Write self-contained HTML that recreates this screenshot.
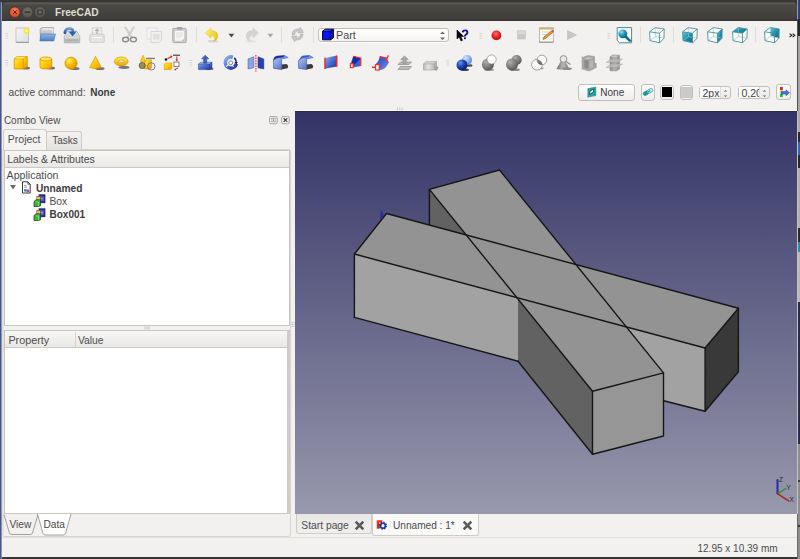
<!DOCTYPE html><html><head><meta charset="utf-8"><style>
*{margin:0;padding:0;box-sizing:border-box}
html,body{width:800px;height:559px;overflow:hidden;background:#383733}
body{position:relative;font-family:"Liberation Sans",sans-serif;font-size:10.5px;color:#3c3c3c}
.a{position:absolute}
.t{white-space:pre;line-height:1}
</style></head><body>
<div class="a" style="left:0;top:0;width:800px;height:559px;background:#383733"></div>
<div class="a" style="left:0;top:2px;width:1px;height:557px;background:#44578a"></div>
<div class="a" style="left:1px;top:2px;width:1px;height:557px;background:#8e97ae"></div>
<div class="a" style="left:797px;top:0;width:3px;height:559px;background:#9a9a9a"></div>
<div class="a" style="left:798px;top:0px;width:2px;height:19px;background:#2c3f82"></div>
<div class="a" style="left:798px;top:19px;width:2px;height:17px;background:#282828"></div>
<div class="a" style="left:798px;top:36px;width:2px;height:96px;background:#a8a8a8"></div>
<div class="a" style="left:798px;top:132px;width:2px;height:36px;background:#2a2a2a"></div>
<div class="a" style="left:798px;top:142px;width:2px;height:13px;background:#3462c0"></div>
<div class="a" style="left:798px;top:168px;width:2px;height:60px;background:#b0b0b0"></div>
<div class="a" style="left:798px;top:228px;width:2px;height:14px;background:#2a2a2a"></div>
<div class="a" style="left:798px;top:242px;width:2px;height:10px;background:#2a90a0"></div>
<div class="a" style="left:798px;top:252px;width:2px;height:50px;background:#b8b8b8"></div>
<div class="a" style="left:798px;top:302px;width:2px;height:142px;background:#2a2a4c"></div>
<div class="a" style="left:798px;top:444px;width:2px;height:115px;background:#8e8e8e"></div>
<div class="a" style="left:798px;top:480px;width:2px;height:2px;background:#3a3a3a"></div>
<div class="a" style="left:798px;top:525px;width:2px;height:2px;background:#3a3a3a"></div>
<div class="a" style="left:797px;top:19px;width:1px;height:92px;background:#505050"></div>
<div class="a" style="left:797px;top:111px;width:1px;height:403px;background:#c4c4c4"></div>
<div class="a" style="left:797px;top:514px;width:1px;height:45px;background:#6a6a6a"></div>
<div class="a" style="left:2px;top:21px;width:795px;height:536px;background:#f2f1f0"></div>
<div class="a" style="left:2px;top:2px;width:795px;height:19px;background:linear-gradient(#4a4944 0px,#5a5852 1.5px,#4a4944 3px,#3f3e3a 17px,#302f2c 19px);border-radius:5px 5px 0 0"></div>
<svg class="a" style="left:8px;top:6px" width="40" height="14" viewBox="0 0 40 14">
<defs><radialGradient id="cl" cx="50%" cy="35%" r="60%"><stop offset="0" stop-color="#f7865b"/><stop offset="1" stop-color="#d9471c"/></radialGradient>
<radialGradient id="gb" cx="50%" cy="35%" r="60%"><stop offset="0" stop-color="#6e6d68"/><stop offset="1" stop-color="#55544f"/></radialGradient></defs>
<circle cx="6.8" cy="6.2" r="5.3" fill="url(#cl)" stroke="#3a1a10" stroke-width="0.5"/>
<path d="M5.2,4.4 L8.8,8 M8.8,4.4 L5.2,8" stroke="#3a1408" stroke-width="1"/>
<circle cx="19.5" cy="6.2" r="5.6" fill="url(#gb)" stroke="#333" stroke-width="0.5"/>
<path d="M16.8,6.2 H22.2" stroke="#3a3935" stroke-width="1.6"/>
<circle cx="32" cy="6.2" r="5.6" fill="url(#gb)" stroke="#333" stroke-width="0.5"/>
<rect x="29.8" y="4" width="4.4" height="4.4" fill="none" stroke="#3a3935" stroke-width="1.2"/>
</svg>
<div class="a t" style="left:55px;top:8px;font-size:10.2px;color:#dfdbd2;font-weight:bold;">FreeCAD</div>
<svg class="a" style="left:5px;top:33px" width="4" height="7" viewBox="0 0 4 7"><path d="M0.5,0.5H3M0.5,2.8H3M0.5,5.1H3" stroke="#c8c5c0" stroke-width="0.7"/></svg>
<svg class="a" style="left:14px;top:26px" width="17" height="18" viewBox="0 0 17 18">
<defs><linearGradient id="pg" x1="0" y1="0" x2="1" y2="1"><stop offset="0" stop-color="#f6f6f6"/><stop offset="1" stop-color="#dcdcdc"/></linearGradient>
<radialGradient id="star"><stop offset="0" stop-color="#ffffc0"/><stop offset="0.45" stop-color="#f5e73a"/><stop offset="1" stop-color="#f5e73a" stop-opacity="0"/></radialGradient></defs>
<rect x="2" y="2" width="12.6" height="14.6" fill="url(#pg)" stroke="#b9b9b9" stroke-width="0.8"/>
<rect x="2.3" y="15.8" width="12" height="1.2" fill="#9a9a9a"/>
<circle cx="12.6" cy="4.9" r="4" fill="url(#star)"/>
</svg>
<svg class="a" style="left:38px;top:26px" width="19" height="17" viewBox="0 0 19 17">
<defs><linearGradient id="fb" x1="0" y1="0" x2="0" y2="1"><stop offset="0" stop-color="#8fb6e6"/><stop offset="1" stop-color="#4a7fc4"/></linearGradient>
<linearGradient id="fg" x1="0" y1="0" x2="0" y2="1"><stop offset="0" stop-color="#e0e0e0"/><stop offset="1" stop-color="#9a9a9a"/></linearGradient></defs>
<path d="M2,3 L4,1.6 L15.5,1.6 L15.5,9 L2.5,14.5 Z" fill="url(#fg)" stroke="#8a8a8a" stroke-width="0.6"/>
<path d="M4.5,3 H15 V8" fill="none" stroke="#fafafa" stroke-width="0.8"/>
<path d="M3,8 L17.5,8 L15.8,15 L1.8,15 Z" fill="url(#fb)" stroke="#3d6fb0" stroke-width="0.5"/>
</svg>
<svg class="a" style="left:63px;top:26px" width="18" height="18" viewBox="0 0 18 18">
<defs><linearGradient id="dr" x1="0" y1="0" x2="0" y2="1"><stop offset="0" stop-color="#f4f4f4"/><stop offset="1" stop-color="#c4c4c4"/></linearGradient>
<linearGradient id="ar" x1="0" y1="0" x2="0" y2="1"><stop offset="0" stop-color="#6e9ad6"/><stop offset="1" stop-color="#2456a8"/></linearGradient></defs>
<path d="M1.3,10.5 L4.2,5.2 H13.8 L16.7,10.5 V16.3 Q16.7,16.8 16.2,16.8 H1.8 Q1.3,16.8 1.3,16.3 Z" fill="url(#dr)" stroke="#9e9e9e" stroke-width="0.7"/>
<path d="M3.2,10.3 L5.2,6.6 H12.8 L14.8,10.3 Z" fill="#dcdcdc" stroke="#b4b4b4" stroke-width="0.4"/>
<rect x="1.6" y="12.6" width="14.8" height="3.9" fill="#bdbdbd"/>
<path d="M3,14.2 H15" stroke="#8a8a8a" stroke-width="0.6" stroke-dasharray="1,0.6"/>
<path d="M1.8,6.8 C2.2,2.6 6.5,1.4 9.6,3.6 L9.6,5.2" fill="none" stroke="url(#ar)" stroke-width="2.6" stroke-linecap="round"/>
<path d="M5.6,5.4 H13.6 L9.6,10.6 Z" fill="#2f62b2"/>
</svg>
<svg class="a" style="left:88px;top:26px" width="18" height="18" viewBox="0 0 18 18">
<rect x="4.2" y="1.8" width="9.6" height="7.5" fill="#ececec" stroke="#c8c8c8" stroke-width="0.7"/>
<path d="M9,3.2 V8 M7.3,4.9 L9,3.2 L10.7,4.9" stroke="#b4b4b4" stroke-width="1.3" fill="none"/>
<path d="M1.8,10 Q1.8,8.2 3.5,8.2 H14.5 Q16.2,8.2 16.2,10 V15.6 Q16.2,16.3 15.5,16.3 H2.5 Q1.8,16.3 1.8,15.6 Z" fill="#e6e6e6" stroke="#bebebe" stroke-width="0.7"/>
<rect x="3.2" y="10.6" width="11.6" height="2.2" fill="#fbfbfb" stroke="#cfcfcf" stroke-width="0.5"/>
</svg>
<div class="a" style="left:113px;top:27px;width:1px;height:16px;background:#e0ded9"></div>
<svg class="a" style="left:121px;top:26px" width="17" height="18" viewBox="0 0 17 18">
<path d="M3.5,1.2 L5,1.2 L10.8,10.5 L9.6,11.2 Z M13.5,1.2 L12,1.2 L6.2,10.5 L7.4,11.2 Z" fill="#dedede" stroke="#b0b0b0" stroke-width="0.5"/>
<ellipse cx="4.6" cy="13.5" rx="3" ry="2.3" fill="none" stroke="#8e8e8e" stroke-width="1.5"/>
<ellipse cx="12.4" cy="13.5" rx="3" ry="2.3" fill="none" stroke="#8e8e8e" stroke-width="1.5"/>
</svg>
<svg class="a" style="left:146px;top:26px" width="17" height="18" viewBox="0 0 17 18">
<rect x="1" y="2" width="10" height="11" fill="#f4f4f4" stroke="#dadada" stroke-width="0.8"/>
<path d="M5,5.5 H15.5 V14 L13,16.5 H5 Z" fill="#f0f0f0" stroke="#cfcfcf" stroke-width="0.8"/>
<rect x="7" y="8" width="6.5" height="5.5" fill="#e0e0e0"/>
</svg>
<svg class="a" style="left:171px;top:26px" width="17" height="18" viewBox="0 0 17 18">
<rect x="1.8" y="2.4" width="13.4" height="14.2" rx="0.8" fill="#d2d2d2" stroke="#9a9a9a" stroke-width="0.8"/>
<rect x="3.4" y="4.3" width="10.2" height="10.8" fill="#f6f6f6" stroke="#bcbcbc" stroke-width="0.5"/>
<rect x="5.6" y="1" width="5.8" height="2.8" rx="0.8" fill="#a4a4a4"/>
<path d="M5,7 H12 M5,9 H12 M5,11 H10" stroke="#d8d8d8" stroke-width="0.8"/>
<path d="M10.5,15 L13.5,12 V15 Z" fill="#c0c0c0"/>
</svg>
<div class="a" style="left:196px;top:27px;width:1px;height:16px;background:#e0ded9"></div>
<svg class="a" style="left:204px;top:26px" width="16" height="17" viewBox="0 0 16 17">
<defs><linearGradient id="yu" x1="0" y1="0" x2="1" y2="1"><stop offset="0" stop-color="#fff27a"/><stop offset="1" stop-color="#e2c300"/></linearGradient></defs>
<ellipse cx="9" cy="15.3" rx="5.5" ry="1.2" fill="#d8d6d2"/>
<path d="M1.5,7 L7,1.8 L7,4.6 C12.5,4.6 15,8 13.3,12.2 C12.6,14 11,15 9.5,15.3 C11.2,13.2 11.5,9.8 7,9.6 L7,12.3 Z" fill="url(#yu)" stroke="#d6b600" stroke-width="0.4"/>
</svg>
<svg class="a" style="left:228px;top:33px" width="7" height="5" viewBox="0 0 7 5"><path d="M0.5,0.8 H6.3 L3.4,4.4 Z" fill="#4a4a4a"/></svg>
<svg class="a" style="left:244px;top:26px" width="16" height="17" viewBox="0 0 16 17">
<ellipse cx="7" cy="15.3" rx="5.5" ry="1.2" fill="#e6e4e0"/>
<path d="M14.5,7 L9,1.8 L9,4.6 C3.5,4.6 1,8 2.7,12.2 C3.4,14 5,15 6.5,15.3 C4.8,13.2 4.5,9.8 9,9.6 L9,12.3 Z" fill="#d4d4d4" stroke="#c8c8c8" stroke-width="0.4"/>
</svg>
<svg class="a" style="left:267px;top:33px" width="7" height="5" viewBox="0 0 7 5"><path d="M0.5,0.8 H6.3 L3.4,4.4 Z" fill="#a8a8a8"/></svg>
<div class="a" style="left:281px;top:27px;width:1px;height:16px;background:#e0ded9"></div>
<svg class="a" style="left:289px;top:26px" width="17" height="17" viewBox="0 0 17 17">
<path d="M3,9 C3,4.5 6.5,2.5 10,3 L11.5,1.3 L14.5,6.5 L8.8,7 L10.3,5.2 C7.5,4.6 5.5,6.3 5.6,9 Z" fill="#c6c6c6" stroke="#a8a8a8" stroke-width="0.5"/>
<path d="M14,8 C14,12.5 10.5,14.5 7,14 L5.5,15.7 L2.5,10.5 L8.2,10 L6.7,11.8 C9.5,12.4 11.5,10.7 11.4,8 Z" fill="#c6c6c6" stroke="#a8a8a8" stroke-width="0.5"/>
</svg>
<div class="a" style="left:313px;top:27px;width:1px;height:16px;background:#e0ded9"></div>
<div class="a" style="left:318px;top:27.5px;width:131px;height:14.8px;border:1px solid #c2beb6;border-radius:3px;background:linear-gradient(#ffffff,#f4f3f1);box-shadow:0 1px 0 rgba(255,255,255,0.8)"></div>
<svg class="a" style="left:321px;top:28px" width="14" height="14" viewBox="0 0 14 14">
<path d="M1.6,3.2 L4.4,1.2 L12.4,1.2 L12.4,9.8 L9.6,11.8 L1.6,11.8 Z" fill="#0a14f0" stroke="#000020" stroke-width="1" stroke-linejoin="round"/>
<path d="M1.6,3.2 H9.6 V11.8 M9.6,3.2 L12.4,1.2" fill="none" stroke="#000020" stroke-width="0.9"/>
<path d="M2.4,2.8 L4.6,1.8 L11,1.8 L9.2,2.8 Z" fill="#3a4aff"/>
</svg>
<div class="a t" style="left:336px;top:30px;font-size:10.8px;color:#4c4c4c;font-weight:normal;">Part</div>
<svg class="a" style="left:439px;top:30px" width="7" height="12" viewBox="0 0 7 12"><path d="M1,4 L3.5,1.5 L6,4 Z M1,7.5 L3.5,10 L6,7.5 Z" fill="#6a6a6a"/></svg>
<svg class="a" style="left:455px;top:28px" width="16" height="15" viewBox="0 0 16 15">
<path d="M2,2 L2,11 L4.2,9 L6,13 L7.5,12.3 L5.8,8.4 L8.6,8.4 Z" fill="#000" stroke="#000" stroke-width="0.6" stroke-linejoin="round"/>
<path d="M7.7,4.4 Q7.8,2.4 10.3,2.4 Q12.4,2.4 12.4,4.4 Q12.4,5.7 11,6.5 Q9.9,7.2 9.9,8.6" fill="none" stroke="#10108a" stroke-width="1.9"/>
<rect x="9" y="9.4" width="1.9" height="1.7" fill="#10108a"/>
</svg>
<svg class="a" style="left:479px;top:33px" width="4" height="7" viewBox="0 0 4 7"><path d="M0.5,0.5H3M0.5,2.8H3M0.5,5.1H3" stroke="#c8c5c0" stroke-width="0.7"/></svg>
<svg class="a" style="left:490px;top:29px" width="13" height="13" viewBox="0 0 13 13">
<defs><radialGradient id="rec" cx="45%" cy="35%" r="60%"><stop offset="0" stop-color="#ff7a7a"/><stop offset="0.6" stop-color="#ee1d1d"/><stop offset="1" stop-color="#c80d0d"/></radialGradient></defs>
<circle cx="6.4" cy="6.4" r="4.9" fill="url(#rec)"/>
</svg>
<svg class="a" style="left:516px;top:29px" width="11" height="12" viewBox="0 0 11 12"><rect x="1.5" y="1.8" width="8" height="8.2" fill="#c8c8c8" stroke="#bdbdbd" stroke-width="0.5"/><rect x="2" y="2.2" width="7" height="3" fill="#d8d8d8"/></svg>
<svg class="a" style="left:538px;top:26px" width="17" height="18" viewBox="0 0 17 18">
<rect x="1.5" y="2" width="13.8" height="14.5" fill="#fbfbf6" stroke="#a8a8a0" stroke-width="0.8"/>
<rect x="1.5" y="1.5" width="13.8" height="2" fill="#c9b070"/>
<rect x="1.8" y="15.5" width="13.2" height="1.3" fill="#9c9c94"/>
<path d="M4,6 H11 M4,8.5 H9 M4,11 H8" stroke="#c8c8c0" stroke-width="0.7"/>
<path d="M5,13.5 L6,11 L13.5,4.8 L15,6.3 L7.5,12.5 Z" fill="#f0a030" stroke="#8a4a10" stroke-width="0.6"/>
<path d="M13.5,4.8 L15,6.3 L16,5.3 L14.5,3.8 Z" fill="#d04040"/>
</svg>
<svg class="a" style="left:566px;top:29px" width="12" height="12" viewBox="0 0 12 12"><path d="M1.5,1.5 L10.5,6 L1.5,10.5 Z" fill="#c6c6c6" stroke="#b6b6b6" stroke-width="0.5"/></svg>
<svg class="a" style="left:607px;top:33px" width="4" height="7" viewBox="0 0 4 7"><path d="M0.5,0.5H3M0.5,2.8H3M0.5,5.1H3" stroke="#c8c5c0" stroke-width="0.7"/></svg>
<svg class="a" style="left:616px;top:26px" width="17" height="18" viewBox="0 0 17 18">
<defs><radialGradient id="mg" cx="35%" cy="30%" r="70%"><stop offset="0" stop-color="#9be0f4"/><stop offset="0.5" stop-color="#1f9fc0"/><stop offset="1" stop-color="#0b6a86"/></radialGradient></defs>
<path d="M1.2,1.6 H15.6 V16.8 H3.5 L1.2,14.5 Z" fill="#f8fcfc" stroke="#4d8a94" stroke-width="1"/>
<path d="M10,11 L13.8,14.6" stroke="#0d6f88" stroke-width="2.6" stroke-linecap="round"/>
<circle cx="6.8" cy="7.8" r="4.4" fill="url(#mg)"/>
</svg>
<div class="a" style="left:640px;top:27px;width:1px;height:16px;background:#e0ded9"></div>
<svg class="a" style="left:649px;top:27px" width="16" height="17" viewBox="0 0 16 17"><defs><linearGradient id="cg649" x1="0" y1="0" x2="1" y2="1"><stop offset="0" stop-color="#6cc8e0"/><stop offset="0.5" stop-color="#1a8fae"/><stop offset="1" stop-color="#0c6f8a"/></linearGradient></defs><polygon points="0.6,4.8 6.2,0.6 15.2,2.0 15.0,11.2 10.6,15.8 1.0,13.6" fill="#fbfdfd"/><g fill="none" stroke="#4a8e98" stroke-width="0.9" stroke-linejoin="round"><path d="M6.4,9.5 L6.2,0.6 M6.4,9.5 L15.0,11.2 M6.4,9.5 L1.0,13.6" stroke="#9cc4ca" stroke-width="0.7"/><polygon points="0.6,4.8 6.2,0.6 15.2,2.0 15.0,11.2 10.6,15.8 1.0,13.6"/><path d="M0.6,4.8 L10.4,6.2 L15.2,2.0 M10.4,6.2 L10.6,15.8"/></g></svg>
<div class="a" style="left:673px;top:27px;width:1px;height:16px;background:#e0ded9"></div>
<svg class="a" style="left:681.5px;top:27px" width="16" height="17" viewBox="0 0 16 17"><defs><linearGradient id="cg681" x1="0" y1="0" x2="1" y2="1"><stop offset="0" stop-color="#6cc8e0"/><stop offset="0.5" stop-color="#1a8fae"/><stop offset="1" stop-color="#0c6f8a"/></linearGradient></defs><polygon points="0.6,4.8 6.2,0.6 15.2,2.0 15.0,11.2 10.6,15.8 1.0,13.6" fill="#fbfdfd"/><polygon points="0.6,4.8 10.4,6.2 10.6,15.8 1.0,13.6" fill="url(#cg681)"/><g fill="none" stroke="#4a8e98" stroke-width="0.9" stroke-linejoin="round"><path d="M6.4,9.5 L6.2,0.6 M6.4,9.5 L15.0,11.2 M6.4,9.5 L1.0,13.6" stroke="#9cc4ca" stroke-width="0.7"/><polygon points="0.6,4.8 6.2,0.6 15.2,2.0 15.0,11.2 10.6,15.8 1.0,13.6"/><path d="M0.6,4.8 L10.4,6.2 L15.2,2.0 M10.4,6.2 L10.6,15.8"/></g></svg>
<svg class="a" style="left:706.5px;top:27px" width="16" height="17" viewBox="0 0 16 17"><defs><linearGradient id="cg706" x1="0" y1="0" x2="1" y2="1"><stop offset="0" stop-color="#6cc8e0"/><stop offset="0.5" stop-color="#1a8fae"/><stop offset="1" stop-color="#0c6f8a"/></linearGradient></defs><polygon points="0.6,4.8 6.2,0.6 15.2,2.0 15.0,11.2 10.6,15.8 1.0,13.6" fill="#fbfdfd"/><polygon points="10.4,6.2 15.2,2.0 15.0,11.2 10.6,15.8" fill="url(#cg706)"/><g fill="none" stroke="#4a8e98" stroke-width="0.9" stroke-linejoin="round"><path d="M6.4,9.5 L6.2,0.6 M6.4,9.5 L15.0,11.2 M6.4,9.5 L1.0,13.6" stroke="#9cc4ca" stroke-width="0.7"/><polygon points="0.6,4.8 6.2,0.6 15.2,2.0 15.0,11.2 10.6,15.8 1.0,13.6"/><path d="M0.6,4.8 L10.4,6.2 L15.2,2.0 M10.4,6.2 L10.6,15.8"/></g></svg>
<svg class="a" style="left:731.5px;top:27px" width="16" height="17" viewBox="0 0 16 17"><defs><linearGradient id="cg731" x1="0" y1="0" x2="1" y2="1"><stop offset="0" stop-color="#6cc8e0"/><stop offset="0.5" stop-color="#1a8fae"/><stop offset="1" stop-color="#0c6f8a"/></linearGradient></defs><polygon points="0.6,4.8 6.2,0.6 15.2,2.0 15.0,11.2 10.6,15.8 1.0,13.6" fill="#fbfdfd"/><polygon points="0.6,4.8 6.2,0.6 15.2,2.0 10.4,6.2" fill="url(#cg731)"/><g fill="none" stroke="#4a8e98" stroke-width="0.9" stroke-linejoin="round"><path d="M6.4,9.5 L6.2,0.6 M6.4,9.5 L15.0,11.2 M6.4,9.5 L1.0,13.6" stroke="#9cc4ca" stroke-width="0.7"/><polygon points="0.6,4.8 6.2,0.6 15.2,2.0 15.0,11.2 10.6,15.8 1.0,13.6"/><path d="M0.6,4.8 L10.4,6.2 L15.2,2.0 M10.4,6.2 L10.6,15.8"/></g></svg>
<div class="a" style="left:755px;top:27px;width:1px;height:16px;background:#e0ded9"></div>
<svg class="a" style="left:764px;top:27px" width="16" height="17" viewBox="0 0 16 17"><defs><linearGradient id="cg764" x1="0" y1="0" x2="1" y2="1"><stop offset="0" stop-color="#6cc8e0"/><stop offset="0.5" stop-color="#1a8fae"/><stop offset="1" stop-color="#0c6f8a"/></linearGradient></defs><polygon points="0.6,4.8 6.2,0.6 15.2,2.0 15.0,11.2 10.6,15.8 1.0,13.6" fill="#fbfdfd"/><polygon points="6.6,0.6 15.2,2.0 15.0,11.2 6.6,8.6" fill="url(#cg764)"/><g fill="none" stroke="#4a8e98" stroke-width="0.9" stroke-linejoin="round"><path d="M6.4,9.5 L6.2,0.6 M6.4,9.5 L15.0,11.2 M6.4,9.5 L1.0,13.6" stroke="#9cc4ca" stroke-width="0.7"/><polygon points="0.6,4.8 6.2,0.6 15.2,2.0 15.0,11.2 10.6,15.8 1.0,13.6"/><path d="M0.6,4.8 L10.4,6.2 L15.2,2.0 M10.4,6.2 L10.6,15.8"/></g></svg>
<svg class="a" style="left:789px;top:33px" width="7" height="5" viewBox="0 0 7 5"><path d="M0.6,0.6 L2.8,2.3 L0.6,4 M3.6,0.6 L5.8,2.3 L3.6,4" fill="none" stroke="#222" stroke-width="1.1"/></svg>
<div class="a" style="left:295px;top:110px;width:502px;height:1px;background:#fbfbfa"></div>
<div class="a" style="left:295px;top:111px;width:502px;height:403px;background:linear-gradient(#333366,#9898ad)"></div>
<div class="a" style="left:295px;top:111px;width:502px;height:1px;background:#2a2a58"></div>
<svg class="a" style="left:396px;top:107px" width="8" height="4" viewBox="0 0 8 4"><path d="M1.5,0.5 V3.5 M3.8,0.5 V3.5 M6.1,0.5 V3.5" stroke="#c4c1bc" stroke-width="0.8"/></svg>
<svg class="a" style="left:291px;top:322px" width="4" height="6" viewBox="0 0 4 6"><path d="M0.3,0.6 H3.5 M0.3,2.5 H3.5 M0.3,4.4 H3.5" stroke="#c4c1bc" stroke-width="0.8"/></svg>
<svg class="a" style="left:0;top:0" width="800" height="559" viewBox="0 0 800 559">
<g stroke="none">
<polygon fill="#626262" points="429.4,189.4 465,234 429.4,224.4"/>
<polygon fill="#a2a2a2" points="354.4,254 705.1,348 705.1,411.3 354.4,317.4"/>
<polygon fill="#393939" points="705.1,348 738.4,308.3 738.4,371.8 705.1,411.3"/>
<polygon fill="#939393" points="354.4,254 386.5,213.5 738.4,308.3 705.1,348"/>
<polygon fill="#626262" points="518,297.5 592.5,391.3 592.5,454.3 518,361.2"/>
<polygon fill="#969696" points="592.5,391.3 663.5,372.9 663.5,436 592.5,454.3"/>
<polygon fill="#939393" points="429.4,189.4 499.5,170 663.5,372.9 592.5,391.3"/>
</g>
<g stroke="#161616" stroke-width="1.4" fill="none" stroke-linejoin="round" stroke-linecap="round">
<polyline points="354.4,317.4 354.4,254 386.5,213.5 738.4,308.3 705.1,348 354.4,254"/>
<polyline points="705.1,348 705.1,411.3 738.4,371.8 738.4,308.3"/>
<polyline points="354.4,317.4 518,361.2"/>
<polyline points="663.5,400.8 705.1,411.3"/>
<polyline points="429.4,224.4 429.4,189.4 499.5,170 663.5,372.9 592.5,391.3 429.4,189.4"/>
<polyline points="592.5,391.3 592.5,454.3 663.5,436 663.5,372.9"/>
<polyline points="518,361.2 592.5,454.3"/>
</g>
<path d="M380.8,210 L382.2,211 L383.8,215.5 L381.5,219.3 L380.2,218.5 Z" fill="#2c2ca8"/>
<g stroke-linecap="round">
<line x1="777.5" y1="493.6" x2="777.5" y2="480" stroke="#2828a8" stroke-width="2"/>
<line x1="777.5" y1="493.6" x2="785.8" y2="488.6" stroke="#2a9a2a" stroke-width="1.6"/>
<line x1="777.5" y1="493.6" x2="788.6" y2="500.8" stroke="#a82828" stroke-width="1.6"/>
</g>
<g font-family="Liberation Sans" font-size="6.5" fill="#2a2a2a">
<text x="779" y="481.5">Z</text><text x="786.5" y="489.5">Y</text><text x="789.5" y="501.5">X</text>
</g>
</svg>
<svg class="a" style="left:5px;top:60px" width="4" height="7" viewBox="0 0 4 7"><path d="M0.5,0.5H3M0.5,2.8H3M0.5,5.1H3" stroke="#c8c5c0" stroke-width="0.7"/></svg>
<svg class="a" style="left:13px;top:55px" width="18" height="16" viewBox="0 0 18 16"><defs><linearGradient id="yg" x1="0" y1="0" x2="1" y2="1"><stop offset="0" stop-color="#fff04a"/><stop offset="0.55" stop-color="#ffc400"/><stop offset="1" stop-color="#f09800"/></linearGradient></defs>
<ellipse cx="13" cy="13" rx="4" ry="1.5" fill="#555" opacity="0.8"/>
<path d="M1.2,3.8 L4,1.7 L14.3,1.7 L14.3,11.8 L10.2,14 L1.2,14 Z" fill="url(#yg)" stroke="#c88a00" stroke-width="0.7"/>
<path d="M1.2,3.8 H10.2 V14 M10.2,3.8 L14.3,1.7" fill="none" stroke="#c88a00" stroke-width="0.6"/>
<path d="M1.8,3.6 L4.2,2.2 L13.5,2.2 L10,3.6 Z" fill="#fff27a"/>
</svg>
<svg class="a" style="left:38px;top:55px" width="18" height="16" viewBox="0 0 18 16"><defs><linearGradient id="yg2" x1="0" y1="0" x2="1" y2="1"><stop offset="0" stop-color="#fff04a"/><stop offset="0.55" stop-color="#ffc400"/><stop offset="1" stop-color="#f09800"/></linearGradient></defs>
<ellipse cx="13" cy="13" rx="4" ry="1.5" fill="#555" opacity="0.8"/>
<path d="M2,4 V12 A5.9,2 0 0 0 13.8,12 V4" fill="url(#yg2)" stroke="#c88a00" stroke-width="0.7"/>
<ellipse cx="7.9" cy="4" rx="5.9" ry="2" fill="#ffe44a" stroke="#c88a00" stroke-width="0.7"/>
</svg>
<svg class="a" style="left:63px;top:55px" width="18" height="16" viewBox="0 0 18 16"><defs><radialGradient id="sg" cx="38%" cy="32%" r="65%"><stop offset="0" stop-color="#fff36a"/><stop offset="0.5" stop-color="#ffc000"/><stop offset="1" stop-color="#e89400"/></radialGradient></defs>
<ellipse cx="12" cy="13.5" rx="4.5" ry="1.5" fill="#555" opacity="0.8"/>
<circle cx="8" cy="8.2" r="6.1" fill="url(#sg)" stroke="#c88a00" stroke-width="0.6"/>
</svg>
<svg class="a" style="left:88px;top:55px" width="18" height="16" viewBox="0 0 18 16"><defs><linearGradient id="yg3" x1="0" y1="0" x2="1" y2="1"><stop offset="0" stop-color="#fff04a"/><stop offset="0.55" stop-color="#ffc400"/><stop offset="1" stop-color="#f09800"/></linearGradient></defs>
<ellipse cx="12" cy="13.5" rx="4.5" ry="1.5" fill="#555" opacity="0.8"/>
<path d="M7.6,1.4 L13.3,12.6 Q7.6,14.8 1.6,12.6 Z" fill="url(#yg3)" stroke="#c88a00" stroke-width="0.6"/>
</svg>
<svg class="a" style="left:113px;top:55px" width="18" height="16" viewBox="0 0 18 16"><defs><linearGradient id="tg" x1="0" y1="0" x2="0" y2="1"><stop offset="0" stop-color="#fff04a"/><stop offset="1" stop-color="#f0a000"/></linearGradient></defs>
<ellipse cx="11" cy="12.3" rx="5.5" ry="1.6" fill="#555" opacity="0.8"/>
<ellipse cx="8.2" cy="6.4" rx="6.9" ry="4.4" fill="url(#tg)" stroke="#c88a00" stroke-width="0.6"/>
<ellipse cx="8.3" cy="6.2" rx="2.8" ry="1.2" fill="#f4f0d0" stroke="#c88a00" stroke-width="0.5"/>
</svg>
<svg class="a" style="left:138px;top:54px" width="18" height="18" viewBox="0 0 18 18"><defs><linearGradient id="yg4" x1="0" y1="0" x2="1" y2="1"><stop offset="0" stop-color="#fff04a"/><stop offset="0.55" stop-color="#ffc400"/><stop offset="1" stop-color="#f09800"/></linearGradient></defs>
<path d="M8,4.3 H17" stroke="#555" stroke-width="0.9"/>
<path d="M6.5,7 L8,5.8 L13.5,5.8 L13.5,14 L12,15 L6.5,15 Z" fill="url(#yg4)" stroke="#c88a00" stroke-width="0.5"/>
<path d="M5,1 L7.8,7.5 L2.2,7.5 Z" fill="#ffcc10" stroke="#c88a00" stroke-width="0.4"/>
<circle cx="4.2" cy="11.5" r="3.1" fill="#8a7a30" fill-opacity="0.85" stroke="#4a4a3a" stroke-width="0.7"/>
<circle cx="13.3" cy="12.4" r="3.7" fill="none" stroke="#6a6aa8" stroke-width="0.9"/>
</svg>
<svg class="a" style="left:163px;top:54px" width="18" height="18" viewBox="0 0 18 18"><defs><linearGradient id="yg5" x1="0" y1="0" x2="1" y2="1"><stop offset="0" stop-color="#fff04a"/><stop offset="0.55" stop-color="#ffc400"/><stop offset="1" stop-color="#f09800"/></linearGradient></defs>
<circle cx="3" cy="5.5" r="1.3" fill="#111"/>
<path d="M4.5,4.8 L8.5,2.5" stroke="#e02020" stroke-width="1.1"/><path d="M7,1.5 L9.5,2 L8.5,4 Z" fill="#e02020"/>
<path d="M10,1.2 H17" stroke="#222" stroke-width="1"/>
<path d="M13.8,2.5 V6.5" stroke="#e02020" stroke-width="1"/><path d="M12.5,5.5 L13.8,7.5 L15,5.5 Z" fill="#e02020"/>
<path d="M1.2,10 L2.6,9 L8.8,9 L8.8,14.6 L7.5,15.6 L1.2,15.6 Z" fill="url(#yg5)" stroke="#c88a00" stroke-width="0.5"/>
<rect x="11" y="8" width="5" height="4.6" fill="#fff" stroke="#666" stroke-width="0.8"/>
<path d="M12,15.5 L15,14" stroke="#e02020" stroke-width="1"/><path d="M11,15.8 L13,14.5 L13,16.5 Z" fill="#e02020"/>
</svg>
<svg class="a" style="left:189px;top:60px" width="4" height="7" viewBox="0 0 4 7"><path d="M0.5,0.5H3M0.5,2.8H3M0.5,5.1H3" stroke="#c8c5c0" stroke-width="0.7"/></svg>
<svg class="a" style="left:197px;top:54px" width="18" height="18" viewBox="0 0 18 18"><defs><linearGradient id="bg1" x1="0" y1="0" x2="1" y2="1"><stop offset="0" stop-color="#9ab4ee"/><stop offset="0.5" stop-color="#4a6cd0"/><stop offset="1" stop-color="#1c2f9a"/></linearGradient></defs>
<ellipse cx="12.5" cy="14.8" rx="4" ry="1.3" fill="#444" opacity="0.8"/>
<path d="M1.5,10 L4,8.2 L15,8.2 L15,13.8 L12.5,15.6 L1.5,15.6 Z" fill="url(#bg1)" stroke="#2a3a8a" stroke-width="0.5"/>
<path d="M1.8,9.9 L4.1,8.5 L14.5,8.5 L12.4,9.9 Z" fill="#a8bcf0"/>
<path d="M1.5,10 H12.5 V15.6 M12.5,10 L15,8.2" fill="none" stroke="#2a3a8a" stroke-width="0.5"/>
<path d="M8.2,1.2 L11.8,4.8 L9.7,4.8 L9.7,9.2 L6.7,9.2 L6.7,4.8 L4.6,4.8 Z" fill="#3a66d0" stroke="#1a2a80" stroke-width="0.5"/>
</svg>
<svg class="a" style="left:222px;top:54px" width="18" height="18" viewBox="0 0 18 18"><defs><linearGradient id="bg2" x1="0" y1="0" x2="1" y2="1"><stop offset="0" stop-color="#9ab4ee"/><stop offset="0.5" stop-color="#4a6cd0"/><stop offset="1" stop-color="#1c2f9a"/></linearGradient></defs>
<path d="M10.8,3.2 A5.6,5.6 0 1 0 14.3,9.8" fill="none" stroke="url(#bg2)" stroke-width="3.6"/>
<path d="M4.3,12.5 L7.6,9.6 M11.5,12.8 L9.5,10" stroke="#f2f1f0" stroke-width="1.2"/>
<circle cx="8.7" cy="8.8" r="1.9" fill="#fff" stroke="#555" stroke-width="0.7"/>
<path d="M12.3,4 A4.6,4.6 0 0 1 14.2,8.2" fill="none" stroke="#0e1e78" stroke-width="1.6"/>
<path d="M12.4,8 L15.8,8 L14.2,10.6 Z" fill="#0e1e78"/>
</svg>
<svg class="a" style="left:247px;top:54px" width="18" height="18" viewBox="0 0 18 18"><defs><linearGradient id="bg3" x1="0" y1="0" x2="1" y2="1"><stop offset="0" stop-color="#9ab4ee"/><stop offset="0.5" stop-color="#4a6cd0"/><stop offset="1" stop-color="#1c2f9a"/></linearGradient></defs>
<path d="M1,5 L6.8,2.8 L6.8,13.8 L1,15 Z" fill="#8aa4e6" stroke="#3a52b0" stroke-width="0.5"/>
<path d="M11,2.8 L16.8,5 L16.8,15 L11,13.8 Z" fill="#2840b0" stroke="#1a2a80" stroke-width="0.5"/>
<path d="M8.9,1 V17.5" stroke="#ff2020" stroke-width="1.2" stroke-dasharray="1.6,1"/>
</svg>
<svg class="a" style="left:272px;top:54px" width="18" height="18" viewBox="0 0 18 18"><defs><linearGradient id="ff1" x1="0" y1="0" x2="1" y2="1"><stop offset="0" stop-color="#b8ccf4"/><stop offset="1" stop-color="#3a58c0"/></linearGradient></defs>
<path d="M9.5,10.5 L14.5,10 Q17.2,11.8 15.5,14.2 L9.5,15.6 Z" fill="#3c3c3c"/>
<path d="M1.4,6.8 Q1.6,2.6 5.2,2.1 L12.6,1.6 L16.2,3.6 L9.6,4.9 L9.6,15.6 L1.6,14.4 Z" fill="url(#ff1)" stroke="#2a3a9a" stroke-width="0.5"/>
<path d="M1.4,6.8 Q1.6,2.6 5.2,2.1 L12.6,1.6 L11.2,3.4 L5.6,4.1 Q2.8,4.6 1.4,6.8 Z" fill="#1a2890"/>
<path d="M5.6,4.1 L11.2,3.4 L12.6,1.6 L16.2,3.6 L9.6,4.9 Z" fill="#7090e0"/>
</svg>
<svg class="a" style="left:297px;top:54px" width="18" height="18" viewBox="0 0 18 18"><defs><linearGradient id="ff2" x1="0" y1="0" x2="1" y2="1"><stop offset="0" stop-color="#b8ccf4"/><stop offset="1" stop-color="#3a58c0"/></linearGradient></defs>
<path d="M9.5,10.5 L14.5,10 Q17.2,11.8 15.5,14.2 L9.5,15.6 Z" fill="#3c3c3c"/>
<path d="M1.4,6.8 L5.2,2.1 L12.6,1.6 L16.2,3.6 L9.6,4.9 L9.6,15.6 L1.6,14.4 Z" fill="url(#ff2)" stroke="#2a3a9a" stroke-width="0.5"/>
<path d="M1.4,6.8 L5.2,2.1 L12.6,1.6 L11.2,3.4 L5.6,4.1 L1.4,6.8 Z" fill="#3a5cd0"/>
<path d="M5.6,4.1 L11.2,3.4 L12.6,1.6 L16.2,3.6 L9.6,4.9 Z" fill="#7090e0"/>
</svg>
<svg class="a" style="left:323px;top:54px" width="16" height="17" viewBox="0 0 16 17"><defs><linearGradient id="bg6" x1="0" y1="0" x2="1" y2="1"><stop offset="0" stop-color="#9ab4ee"/><stop offset="0.5" stop-color="#4a6cd0"/><stop offset="1" stop-color="#1c2f9a"/></linearGradient></defs>
<path d="M2,4 L13.8,1.6 L13.8,12.6 L2,14.8 Z" fill="url(#bg6)"/>
<path d="M2,3.8 V15 M13.8,1.4 V12.8" stroke="#ff2020" stroke-width="1.4"/>
</svg>
<svg class="a" style="left:348px;top:54px" width="16" height="17" viewBox="0 0 16 17"><defs><linearGradient id="lf" x1="0" y1="0" x2="1" y2="1"><stop offset="0" stop-color="#6a90f0"/><stop offset="1" stop-color="#2a50c0"/></linearGradient></defs>
<path d="M5.3,2.2 L12.8,4.2 L12.8,12 L5,13.6 L2.4,9.7 Z" fill="url(#lf)"/>
<path d="M5.3,2.2 L12.8,4.2 L5,12.5 L3.5,9.5 Z" fill="#1a2aa0"/>
<path d="M5.3,2.2 L12.8,4.2 L12.8,12" fill="none" stroke="#ff2020" stroke-width="1.1"/>
<rect x="2.4" y="9.8" width="2.8" height="3.9" fill="#fff" stroke="#ff2020" stroke-width="1.1"/>
</svg>
<svg class="a" style="left:371px;top:54px" width="19" height="18" viewBox="0 0 19 18"><defs><linearGradient id="sw" x1="0" y1="0" x2="1" y2="1"><stop offset="0" stop-color="#2a40b8"/><stop offset="1" stop-color="#6a90e8"/></linearGradient></defs>
<path d="M8.7,2.5 L15.8,4.2 L17.4,8.7 Q16,14.5 8.7,16.2 L4.4,10.4 Q8,7.5 8.7,2.5 Z" fill="url(#sw)"/>
<path d="M8.7,2.5 L15.8,4.2" stroke="#ff2020" stroke-width="1.2"/>
<path d="M17.4,1.2 L15.6,5.8 L17.4,8.7" fill="none" stroke="#ff2020" stroke-width="1.2"/>
<rect x="4.6" y="10.6" width="3.6" height="5.4" fill="#fff" stroke="#ff2020" stroke-width="1.1"/>
<path d="M1,13.3 H4.5" stroke="#ff2020" stroke-width="1.5"/>
</svg>
<svg class="a" style="left:396px;top:54px" width="17" height="17" viewBox="0 0 17 17">
<defs><linearGradient id="thk" x1="0" y1="0" x2="1" y2="0"><stop offset="0" stop-color="#8a8a8a"/><stop offset="0.5" stop-color="#b0b0b0"/><stop offset="1" stop-color="#8a8a8a"/></linearGradient></defs>
<path d="M2,15.5 L4.5,12.5 L15.5,12.5 L13,15.5 Z" fill="#bcbcbc" stroke="#8a8a8a" stroke-width="0.7"/>
<path d="M2,10.5 L4.5,8 L15.5,8 L13,10.5 Z" fill="#bcbcbc" stroke="#8a8a8a" stroke-width="0.7"/>
<path d="M8.5,1.8 L12.3,5.6 L10.2,5.6 L10.2,9.5 L6.8,9.5 L6.8,5.6 L4.7,5.6 Z" fill="url(#thk)" stroke="#8a8a8a" stroke-width="0.5"/>
</svg>
<svg class="a" style="left:422px;top:58px" width="18" height="14" viewBox="0 0 18 14">
<defs><linearGradient id="ofs" x1="0" y1="0" x2="1" y2="0"><stop offset="0" stop-color="#b8b8b8"/><stop offset="0.35" stop-color="#e4e4e4"/><stop offset="1" stop-color="#a8a8a8"/></linearGradient></defs>
<path d="M13,8 L16.5,9 L15,12.5 L13,12.5 Z" fill="#9a9a9a"/>
<path d="M1.5,6 L4,3.4 L14.5,3.4 L14.5,9.5 L12.5,12 L1.5,12 Z" fill="url(#ofs)" stroke="#9c9c9c" stroke-width="0.6"/>
<path d="M2,5.8 L4.2,3.8 L14,3.8 L12,5.8 Z" fill="#cfcfcf"/>
<path d="M1.5,6 H12.5 V12 M12.5,6 L14.5,3.4" fill="none" stroke="#a0a0a0" stroke-width="0.5"/>
</svg>
<svg class="a" style="left:446px;top:60px" width="4" height="7" viewBox="0 0 4 7"><path d="M0.5,0.5H3M0.5,2.8H3M0.5,5.1H3" stroke="#c8c5c0" stroke-width="0.7"/></svg>
<svg class="a" style="left:455px;top:54px" width="19" height="18" viewBox="0 0 19 18"><defs>
<radialGradient id="bs1" cx="35%" cy="30%" r="65%"><stop offset="0" stop-color="#d8e4ff"/><stop offset="1" stop-color="#6a8ee8"/></radialGradient>
<radialGradient id="bs2" cx="35%" cy="30%" r="65%"><stop offset="0" stop-color="#6a9af0"/><stop offset="0.5" stop-color="#1e4cc0"/><stop offset="1" stop-color="#0a2480"/></radialGradient></defs>
<ellipse cx="14" cy="11.5" rx="3.5" ry="1.2" fill="#444"/>
<circle cx="12.1" cy="6" r="5" fill="url(#bs1)"/>
<ellipse cx="10" cy="15.8" rx="4" ry="1.2" fill="#444"/>
<circle cx="7" cy="11" r="5.5" fill="url(#bs2)"/>
</svg>
<svg class="a" style="left:480px;top:54px" width="19" height="18" viewBox="0 0 19 18"><defs><radialGradient id="gs1" cx="35%" cy="30%" r="70%"><stop offset="0" stop-color="#b0b0b0"/><stop offset="1" stop-color="#5a5a5a"/></radialGradient></defs>
<ellipse cx="9" cy="15.8" rx="5" ry="1.2" fill="#9a9a9a"/>
<circle cx="7.9" cy="10.5" r="6" fill="url(#gs1)"/>
<circle cx="11.6" cy="5.5" r="4.6" fill="#fff" stroke="#7a7a7a" stroke-width="0.6"/>
</svg>
<svg class="a" style="left:505px;top:54px" width="19" height="18" viewBox="0 0 19 18"><defs><radialGradient id="gs2" cx="35%" cy="30%" r="70%"><stop offset="0" stop-color="#b0b0b0"/><stop offset="1" stop-color="#5a5a5a"/></radialGradient></defs>
<ellipse cx="10" cy="15.8" rx="5" ry="1.2" fill="#8a8a8a"/>
<circle cx="11.6" cy="6" r="5" fill="url(#gs2)"/>
<circle cx="7" cy="10.5" r="6" fill="url(#gs2)"/>
</svg>
<svg class="a" style="left:530px;top:54px" width="19" height="18" viewBox="0 0 19 18">
<defs><clipPath id="cpA"><circle cx="7" cy="10.7" r="5.4"/></clipPath><radialGradient id="lens" cx="40%" cy="40%" r="60%"><stop offset="0" stop-color="#a8a8a8"/><stop offset="1" stop-color="#5a5a5a"/></radialGradient></defs>
<path d="M8,14.5 L14,13.5 L12.5,15.5 Z" fill="#9a9a9a"/>
<circle cx="7" cy="10.7" r="5.4" fill="#fff" stroke="#8a8a8a" stroke-width="0.8"/>
<circle cx="11.9" cy="6" r="4.8" fill="#fff" stroke="#8a8a8a" stroke-width="0.8"/>
<circle cx="11.9" cy="6" r="4.8" fill="url(#lens)" clip-path="url(#cpA)"/>
</svg>
<svg class="a" style="left:556px;top:54px" width="18" height="18" viewBox="0 0 18 18"><defs><linearGradient id="cone" x1="0" y1="0" x2="1" y2="0"><stop offset="0" stop-color="#6a6a6a"/><stop offset="0.5" stop-color="#b8b8b8"/><stop offset="1" stop-color="#7a7a7a"/></linearGradient></defs>
<path d="M7,3 L13.5,15 Q7,16.5 0.5,15 Z" fill="url(#cone)"/>
<ellipse cx="11" cy="14.8" rx="5" ry="1.3" fill="#8a8a8a"/>
<circle cx="7.5" cy="5" r="3.4" fill="#e8e8e8" stroke="#8a8a8a" stroke-width="0.9"/>
<path d="M10,7.5 L14.5,10.5" stroke="#8a8a8a" stroke-width="1.1"/>
</svg>
<svg class="a" style="left:580px;top:54px" width="18" height="18" viewBox="0 0 18 18">
<path d="M1,1.5 L2.8,2.8 L2.8,15.5 L1,16.5 Z" fill="#dadada"/>
<path d="M2.5,3.5 L8,1.5 L14.5,2.5 L14.5,14.5 L9,17 L2.5,15 Z" fill="#a4a4a4" stroke="#8e8e8e" stroke-width="0.5"/>
<path d="M3.5,4.5 L8,3 L13.5,3.8 L8.5,5.5 Z" fill="#c0c0c0"/>
<path d="M4.5,6 L8.5,6.5 V14.5 L4.5,13.8 Z" fill="#8a8a8a"/>
<path d="M9.5,7 L13,6.2 V13.5 L9.5,14.8 Z" fill="#b4b4b4"/>
<rect x="14.5" y="9" width="2" height="5" fill="#9a9a9a"/>
</svg>
<svg class="a" style="left:605px;top:54px" width="19" height="18" viewBox="0 0 19 18">
<defs><linearGradient id="cpd" x1="0" y1="0" x2="1" y2="0"><stop offset="0" stop-color="#8a8a8a"/><stop offset="0.5" stop-color="#b4b4b4"/><stop offset="1" stop-color="#8e8e8e"/></linearGradient></defs>
<path d="M5,2.8 L8,1 L14.5,1.2 L14.5,15 L11.5,17 L5,16.8 Z" fill="url(#cpd)" stroke="#888" stroke-width="0.5"/>
<path d="M5.5,3 L8.2,1.6 L13.8,1.8 L11,3.2 Z" fill="#c8c8c8"/>
<path d="M1,8.5 L6,5 L17.5,5 L12.5,8.5 Z" fill="#bdbdbd" fill-opacity="0.75" stroke="#9a9a9a" stroke-width="0.4"/>
<path d="M1,13.5 L6,10 L17.5,10 L12.5,13.5 Z" fill="#bdbdbd" fill-opacity="0.75" stroke="#9a9a9a" stroke-width="0.4"/>
</svg>
<div class="a t" style="left:8.5px;top:88px;font-size:10.2px;color:#4c4c4c;font-weight:normal;">active command:</div>
<div class="a t" style="left:90.2px;top:88px;font-size:10px;color:#3c3c3c;font-weight:bold;">None</div>
<div class="a" style="left:578px;top:84px;width:56.5px;height:16.5px;border:1px solid #c3bfb8;border-radius:3px;background:linear-gradient(#fdfdfd,#eeedeb);box-shadow:0 1px 0 #fff inset"></div>
<svg class="a" style="left:586px;top:86px" width="12" height="12" viewBox="0 0 12 12">
<path d="M1.8,2.6 L9.9,0.9 L9.9,9.6 L1.8,11.3 Z" fill="#22a4a8" stroke="#18787c" stroke-width="0.6" stroke-dasharray="1.2,0.5"/>
<path d="M3.5,8.4 L3.9,5.3 L7.8,2.9 L7.4,6.1 Z" fill="#fff" stroke="#1a3a3a" stroke-width="0.8" stroke-linejoin="round"/>
</svg>
<div class="a t" style="left:600.3px;top:88px;font-size:10px;color:#3c3c3c;font-weight:normal;">None</div>
<div class="a" style="left:640.5px;top:84px;width:14px;height:16.5px;border:1px solid #c3bfb8;border-radius:3px;background:linear-gradient(#fdfdfd,#eeedeb);box-shadow:0 1px 0 #fff inset"></div>
<svg class="a" style="left:642px;top:86px" width="12" height="12" viewBox="0 0 12 12">
<g transform="rotate(-28 6 6)">
<rect x="0.8" y="4.3" width="6.4" height="3.6" rx="1.8" fill="#1a9c9c" stroke="#0c6a6a" stroke-width="0.5"/>
<rect x="5" y="4.1" width="6.4" height="3.6" rx="1.8" fill="#bfeaea" stroke="#1a8a8a" stroke-width="0.6"/>
<rect x="5.6" y="5.1" width="3" height="1.6" rx="0.8" fill="#2aa8a8"/>
</g>
</svg>
<div class="a" style="left:660px;top:84.5px;width:13.5px;height:15.5px;border:1px solid #c3bfb8;border-radius:3px;background:linear-gradient(#fdfdfd,#eeedeb);box-shadow:0 1px 0 #fff inset"></div>
<div class="a" style="left:661.5px;top:86.5px;width:10.5px;height:10.5px;background:#000"></div>
<div class="a" style="left:679.5px;top:84.5px;width:13.5px;height:15.5px;border:1px solid #c3bfb8;border-radius:3px;background:linear-gradient(#fdfdfd,#eeedeb);box-shadow:0 1px 0 #fff inset"></div>
<div class="a" style="left:681px;top:86.5px;width:10.5px;height:11px;background:#cbcbcb"></div>
<div class="a" style="left:699px;top:85.5px;width:31.5px;height:13.5px;border:1px solid #c3bfb8;border-radius:3px;background:linear-gradient(#f6f6f5,#ecebea)"></div><div class="a" style="left:700px;top:86.5px;width:21px;height:11.5px;background:#fff;border-right:1px solid #dedcd8;overflow:hidden"><div class="a t" style="left:2.5px;top:1.6px;font-size:10.5px;color:#3c3c3c">2px</div></div><svg class="a" style="left:722.75px;top:88.5px" width="5" height="9" viewBox="0 0 5 9"><path d="M0.8,2.6 L2.5,0.9 L4.2,2.6 Z M0.8,6.4 L2.5,8.1 L4.2,6.4 Z" fill="#5c5c5c"/></svg>
<div class="a" style="left:738px;top:85.5px;width:32px;height:13.5px;border:1px solid #c3bfb8;border-radius:3px;background:linear-gradient(#f6f6f5,#ecebea)"></div><div class="a" style="left:739px;top:86.5px;width:21px;height:11.5px;background:#fff;border-right:1px solid #dedcd8;overflow:hidden"><div class="a t" style="left:2.5px;top:1.6px;font-size:10.5px;color:#3c3c3c">0,20</div></div><svg class="a" style="left:762.0px;top:88.5px" width="5" height="9" viewBox="0 0 5 9"><path d="M0.8,2.6 L2.5,0.9 L4.2,2.6 Z M0.8,6.4 L2.5,8.1 L4.2,6.4 Z" fill="#5c5c5c"/></svg>
<div class="a" style="left:776.4px;top:84px;width:14.2px;height:16px;border:1px solid #c3bfb8;border-radius:3px;background:linear-gradient(#fdfdfd,#eeedeb);box-shadow:0 1px 0 #fff inset"></div>
<svg class="a" style="left:778px;top:86px" width="12" height="12" viewBox="0 0 12 12">
<rect x="2" y="1" width="2.8" height="3.2" fill="#e82020"/>
<rect x="2" y="4.2" width="2.8" height="2" fill="#f8e020"/>
<rect x="2" y="8" width="2.8" height="3" fill="#20c020"/>
<path d="M3,5.5 H8 V3.8 L11.5,6.8 L8,9.8 V8.1 H3 Z" fill="#3a7ae0" stroke="#1a4aa0" stroke-width="0.5"/>
</svg>
<div class="a t" style="left:3.9px;top:116px;font-size:10px;color:#4c4c4c;font-weight:normal;">Combo View</div>
<svg class="a" style="left:269px;top:116px" width="22" height="9" viewBox="0 0 22 9">
<rect x="0.6" y="0.4" width="7.6" height="7.4" rx="1.5" fill="#f4f3f1" stroke="#9c9c9c" stroke-width="0.9"/>
<path d="M2.6,2.2 H5 M5.2,2.2 H6.4 V3.4 M2.6,4.6 V5.8 H3.8 M6.4,4.6 V5.8 H4.4 M2.6,2.2 V3.6" stroke="#8a8a8a" stroke-width="0.8" fill="none"/>
<rect x="3.8" y="3.4" width="1.4" height="1.4" fill="#7a7a7a"/>
<rect x="12.6" y="0.4" width="7.6" height="7.4" rx="1.5" fill="#f4f3f1" stroke="#9c9c9c" stroke-width="0.9"/>
<path d="M14.6,2.3 L18.2,5.9 M18.2,2.3 L14.6,5.9" stroke="#444" stroke-width="1.3"/>
</svg>
<div class="a" style="left:2px;top:149px;width:289px;height:388px;border:1px solid #d8d5d0;border-left-color:#e2e0dc;border-radius:0 3px 3px 3px;background:#f2f1f0"></div>
<div class="a" style="left:3px;top:150px;width:1px;height:386px;background:#e4e2de"></div>
<div class="a" style="left:46px;top:131px;width:36px;height:19px;border:1px solid #cfcbc5;border-bottom:none;border-radius:3px 3px 0 0;background:linear-gradient(#f2f1f0,#e4e2df)"></div>
<div class="a" style="left:3px;top:129px;width:44px;height:21px;border:1px solid #cfcbc5;border-bottom:none;border-radius:3px 3px 0 0;background:#f5f4f3"></div>
<div class="a t" style="left:7.8px;top:134px;font-size:10.5px;color:#4c4c4c;font-weight:normal;">Project</div>
<div class="a t" style="left:52.3px;top:136px;font-size:10px;color:#4c4c4c;font-weight:normal;">Tasks</div>
<div class="a" style="left:4px;top:150px;width:286px;height:176px;border:1px solid #c9c5bf;background:#fff"></div>
<div class="a" style="left:5px;top:151px;width:284px;height:17px;background:linear-gradient(#f7f7f6,#e9e8e6);border-bottom:1px solid #cdc9c3"></div>
<div class="a t" style="left:7.2px;top:154px;font-size:10.5px;color:#4c4c4c;font-weight:normal;">Labels &amp; Attributes</div>
<div class="a t" style="left:6.6px;top:170px;font-size:10.6px;color:#4c4c4c;font-weight:normal;">Application</div>
<svg class="a" style="left:9px;top:184px" width="8" height="7" viewBox="0 0 8 7"><path d="M1,1 H7 L4,5.5 Z" fill="#6a6a6a"/></svg>
<svg class="a" style="left:21px;top:181px" width="11" height="13" viewBox="0 0 11 13">
<path d="M1.5,0.8 H6.8 L9.2,3.2 V12 H1.5 Z" fill="#fff" stroke="#222" stroke-width="0.9"/>
<path d="M6.8,0.8 V3.2 H9.2" fill="none" stroke="#222" stroke-width="0.7"/>
<path d="M3,4.5 H5.5 M3,6.2 H6" stroke="#555" stroke-width="0.6"/>
<rect x="3" y="8" width="2.6" height="2.6" fill="#20a0a0"/><rect x="5.6" y="8.5" width="2.6" height="2.6" fill="#c040c0"/>
</svg>
<div class="a t" style="left:36px;top:184px;font-size:10.2px;color:#3c3c3c;font-weight:bold;">Unnamed</div>
<svg class="a" style="left:33px;top:194px" width="13" height="13" viewBox="0 0 13 13">
<rect x="6" y="0.8" width="6" height="8" fill="#3030b0" stroke="#101050" stroke-width="0.7"/>
<path d="M8,2.5 V7 M10,2.5 V7 M8,4.7 H10" stroke="#c8c8ff" stroke-width="0.6"/>
<rect x="3.8" y="2.5" width="3.5" height="6" fill="#e8c060" stroke="#705010" stroke-width="0.6"/>
<path d="M1,7.5 L3,5.8 L7.5,5.8 L7.5,11.8 L5.5,12.5 L1,12.5 Z" fill="#40b040" stroke="#104010" stroke-width="0.7"/>
<path d="M2.5,8 H5.5 V12" fill="none" stroke="#a0f0a0" stroke-width="0.6"/>
</svg>
<div class="a t" style="left:49.5px;top:197px;font-size:10.3px;color:#4c4c4c;font-weight:normal;">Box</div>
<svg class="a" style="left:33px;top:207.5px" width="13" height="13" viewBox="0 0 13 13">
<rect x="6" y="0.8" width="6" height="8" fill="#3030b0" stroke="#101050" stroke-width="0.7"/>
<path d="M8,2.5 V7 M10,2.5 V7 M8,4.7 H10" stroke="#c8c8ff" stroke-width="0.6"/>
<rect x="3.8" y="2.5" width="3.5" height="6" fill="#e8c060" stroke="#705010" stroke-width="0.6"/>
<path d="M1,7.5 L3,5.8 L7.5,5.8 L7.5,11.8 L5.5,12.5 L1,12.5 Z" fill="#40b040" stroke="#104010" stroke-width="0.7"/>
<path d="M2.5,8 H5.5 V12" fill="none" stroke="#a0f0a0" stroke-width="0.6"/>
</svg>
<div class="a t" style="left:49.5px;top:210px;font-size:10px;color:#3c3c3c;font-weight:bold;">Box001</div>
<svg class="a" style="left:144px;top:326px" width="8" height="4" viewBox="0 0 8 4"><path d="M1,0.5 V3.5 M3,0.5 V3.5 M5,0.5 V3.5" stroke="#b8b5b0" stroke-width="0.8"/></svg>
<div class="a" style="left:4px;top:330px;width:286px;height:184px;border:1px solid #c9c5bf;border-right:3px solid #cfcbc6;background:#fff"></div>
<div class="a" style="left:5px;top:331px;width:282px;height:17px;background:linear-gradient(#f7f7f6,#e9e8e6);border-bottom:1px solid #cdc9c3"></div>
<div class="a" style="left:75px;top:332px;width:1px;height:15px;background:#d6d3ce"></div>
<div class="a t" style="left:8.4px;top:335px;font-size:10.8px;color:#4c4c4c;font-weight:normal;">Property</div>
<div class="a t" style="left:78px;top:336px;font-size:10.3px;color:#4c4c4c;font-weight:normal;">Value</div>
<svg class="a" style="left:3px;top:513px" width="70" height="24" viewBox="0 0 70 24">
<path d="M1,1.5 L6.4,20 Q7,21.5 9,21.5 L27,21.5 Q29,21.5 29.5,20 L35,1.5" fill="#f2f1f0" stroke="#8e8c88" stroke-width="0.8"/>
<path d="M34.5,1 L40,20.5 Q40.5,22 42.5,22 L60,22 Q62,22 62.5,20.5 L68,1" fill="#ffffff" stroke="#8e8c88" stroke-width="0.8"/>
</svg>
<div class="a t" style="left:9.5px;top:520px;font-size:10.2px;color:#4c4c4c;font-weight:normal;">View</div>
<div class="a t" style="left:43.5px;top:520px;font-size:10.2px;color:#4c4c4c;font-weight:normal;">Data</div>
<div class="a" style="left:295.5px;top:514px;width:76px;height:20px;border:1px solid #d0ccc6;border-top:none;border-radius:0 0 3px 3px;background:linear-gradient(#e9e8e6,#f0efee)"></div>
<div class="a" style="left:372px;top:514px;width:107px;height:22px;border:1px solid #d0ccc6;border-top:none;border-radius:0 0 3px 3px;background:#f9f9f8"></div>
<div class="a t" style="left:301.3px;top:521px;font-size:10.3px;color:#4c4c4c;font-weight:normal;">Start page</div>
<svg class="a" style="left:355px;top:520.5px" width="9" height="9" viewBox="0 0 9 9"><path d="M1.6,1.6 L7.4,7.4 M7.4,1.6 L1.6,7.4" stroke="#5a5a5a" stroke-width="2.6" stroke-linecap="square"/></svg>
<svg class="a" style="left:462.5px;top:520.5px" width="9" height="9" viewBox="0 0 9 9"><path d="M1.6,1.6 L7.4,7.4 M7.4,1.6 L1.6,7.4" stroke="#5a5a5a" stroke-width="2.6" stroke-linecap="square"/></svg>
<svg class="a" style="left:375px;top:518px" width="13" height="13" viewBox="0 0 13 13">
<defs><linearGradient id="rf" x1="0" y1="0" x2="1" y2="1"><stop offset="0" stop-color="#ff3a10"/><stop offset="1" stop-color="#d01010"/></linearGradient></defs>
<path d="M1.8,2.2 H7.4 V4.6 H4.3 V6 H6.6 V8.2 H4.3 V10.7 H1.8 Z" fill="url(#rf)"/>
<circle cx="7.9" cy="7.7" r="3.3" fill="none" stroke="#1638a8" stroke-width="1.6" stroke-dasharray="1.3,1.29"/>
<circle cx="7.9" cy="7.7" r="2.5" fill="none" stroke="#1638a8" stroke-width="1.6"/>
<circle cx="7.9" cy="7.7" r="0.9" fill="#fff"/>
</svg>
<div class="a t" style="left:393px;top:521px;font-size:10.1px;color:#4c4c4c;font-weight:normal;">Unnamed : 1*</div>
<div class="a" style="left:2px;top:537px;width:795px;height:1px;background:#e2e0dc"></div>
<div class="a t" style="left:697.5px;top:544px;font-size:10px;color:#4c4c4c;font-weight:normal;">12.95 x 10.39 mm</div>
</body></html>
